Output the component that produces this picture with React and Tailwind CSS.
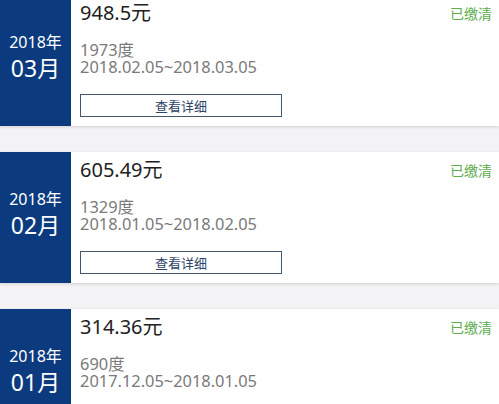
// App.jsx
const bills = [
  { year: '2018年', month: '03月', amount: '948.5元', kwh: '1973度', range: '2018.02.05~2018.03.05' },
  { year: '2018年', month: '02月', amount: '605.49元', kwh: '1329度', range: '2018.01.05~2018.02.05' },
  { year: '2018年', month: '01月', amount: '314.36元', kwh: '690度', range: '2017.12.05~2018.01.05' },
];

export default function App() {
  return (
    <div
      className="h-[404px] w-[499px] overflow-hidden bg-[#f3f3f5]"
      style={{ fontFamily: '"Noto Sans", "Noto Sans CJK SC", sans-serif' }}
    >
      <div className="-mt-[5px] flex flex-col gap-[26px]">
        {bills.map((b) => (
          <BillCard key={b.month} bill={b} />
        ))}
      </div>
    </div>
  );
}

function BillCard({ bill }) {
  return (
    <div className="flex h-[131px] shrink-0 bg-white shadow-[0_1px_3px_rgba(0,0,0,0.15)]">
      {/* month column */}
      <div className="flex w-[71px] shrink-0 flex-col items-center bg-[#0b3a7f] pt-[37px] text-white">
        <span className="text-[16px] leading-[20px]">{bill.year}</span>
        <span className="mt-[2px] text-[23px] leading-[28px]">{bill.month}</span>
      </div>

      {/* details */}
      <div className="flex flex-1 flex-col pl-[9px] pr-[7px] pt-[6px]">
        <div className="flex items-start justify-between">
          <span className="text-[20px] leading-[24px] text-[#222]">{bill.amount}</span>
          <span className="mt-[3px] text-[14px] leading-[20px] text-[#5dad4f]">已缴清</span>
        </div>
        <div className="mt-[16px] text-[16.4px] leading-[17px] text-[#7a7a7a]">
          <div>{bill.kwh}</div>
          <div>{bill.range}</div>
        </div>
        <button className="mt-[19px] h-[23px] w-[202px] border border-[#44576e] text-[13px] leading-[20px] text-[#2e4468]">
          查看详细
        </button>
      </div>
    </div>
  );
}
